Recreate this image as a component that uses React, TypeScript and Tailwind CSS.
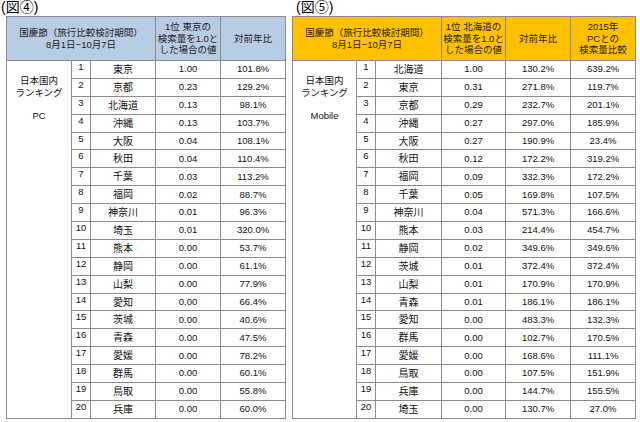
const FONT = "font-['Liberation_Sans','Noto_Sans_CJK_JP',sans-serif]";

type PcRow = [string, string, string];
type MobileRow = [string, string, string, string];

const PC_ROWS: PcRow[] = [
  ["東京", "1.00", "101.8%"],
  ["京都", "0.23", "129.2%"],
  ["北海道", "0.13", "98.1%"],
  ["沖縄", "0.13", "103.7%"],
  ["大阪", "0.04", "108.1%"],
  ["秋田", "0.04", "110.4%"],
  ["千葉", "0.03", "113.2%"],
  ["福岡", "0.02", "88.7%"],
  ["神奈川", "0.01", "96.3%"],
  ["埼玉", "0.01", "320.0%"],
  ["熊本", "0.00", "53.7%"],
  ["静岡", "0.00", "61.1%"],
  ["山梨", "0.00", "77.9%"],
  ["愛知", "0.00", "66.4%"],
  ["茨城", "0.00", "40.6%"],
  ["青森", "0.00", "47.5%"],
  ["愛媛", "0.00", "78.2%"],
  ["群馬", "0.00", "60.1%"],
  ["鳥取", "0.00", "55.8%"],
  ["兵庫", "0.00", "60.0%"],
];

const MOBILE_ROWS: MobileRow[] = [
  ["北海道", "1.00", "130.2%", "639.2%"],
  ["東京", "0.31", "271.8%", "119.7%"],
  ["京都", "0.29", "232.7%", "201.1%"],
  ["沖縄", "0.27", "297.0%", "185.9%"],
  ["大阪", "0.27", "190.9%", "23.4%"],
  ["秋田", "0.12", "172.2%", "319.2%"],
  ["福岡", "0.09", "332.3%", "172.2%"],
  ["千葉", "0.05", "169.8%", "107.5%"],
  ["神奈川", "0.04", "571.3%", "166.6%"],
  ["熊本", "0.03", "214.4%", "454.7%"],
  ["静岡", "0.02", "349.6%", "349.6%"],
  ["茨城", "0.01", "372.4%", "372.4%"],
  ["山梨", "0.01", "170.9%", "170.9%"],
  ["青森", "0.01", "186.1%", "186.1%"],
  ["愛知", "0.00", "483.3%", "132.3%"],
  ["群馬", "0.00", "102.7%", "170.5%"],
  ["愛媛", "0.00", "168.6%", "111.1%"],
  ["鳥取", "0.00", "107.5%", "151.9%"],
  ["兵庫", "0.00", "144.7%", "155.5%"],
  ["埼玉", "0.00", "130.7%", "27.0%"],
];

const cell = "border border-[#8c8c8c] text-center align-middle p-0";

function Label({ device }: { device: string }) {
  return (
    <div className="pt-[14px] text-center leading-[11.5px]">
      <div>日本国内</div>
      <div>ランキング</div>
      <div>&nbsp;</div>
      <div>{device}</div>
    </div>
  );
}

function PcTable() {
  return (
    <table className="table-fixed w-[279px] border border-[#a6a6a6] text-[9.5px] text-[#111]">
      <colgroup>
        <col className="w-[65px]" />
        <col className="w-[19px]" />
        <col className="w-[65px]" />
        <col className="w-[65px]" />
        <col className="w-[65px]" />
      </colgroup>
      <thead>
        <tr className="h-[44px] bg-[#b8cce4] text-[#222] leading-[11.5px]">
          <th colSpan={3} className={cell + " font-normal"}>
            国慶節（旅行比較検討期間）
            <br />
            8月1日−10月7日
          </th>
          <th className={cell + " font-normal"}>
            1位 東京の
            <br />
            検索量を1.0と
            <br />
            した場合の値
          </th>
          <th className={cell + " font-normal"}>対前年比</th>
        </tr>
      </thead>
      <tbody>
        {PC_ROWS.map(([name, value, yoy], i) => (
          <tr key={name} className="h-[17.9px]">
            {i === 0 && (
              <td rowSpan={20} className="border border-[#8c8c8c] align-top p-0">
                <Label device="PC" />
              </td>
            )}
            <td className="border border-[#8c8c8c] align-top text-center pt-[1px] leading-[10px]">
              {i + 1}
            </td>
            <td className={cell + " text-[10px]"}>{name}</td>
            <td className={cell}>{value}</td>
            <td className={cell}>{yoy}</td>
          </tr>
        ))}
      </tbody>
    </table>
  );
}

function MobileTable() {
  return (
    <table className="table-fixed w-[343px] border border-[#a6a6a6] text-[9.5px] text-[#111]">
      <colgroup>
        <col className="w-[64px]" />
        <col className="w-[19px]" />
        <col className="w-[66px]" />
        <col className="w-[64px]" />
        <col className="w-[65px]" />
        <col className="w-[65px]" />
      </colgroup>
      <thead>
        <tr className="h-[44px] bg-[#ffc000] text-[#2a2200] leading-[11.5px]">
          <th colSpan={3} className={cell + " font-normal"}>
            国慶節（旅行比較検討期間）
            <br />
            8月1日−10月7日
          </th>
          <th className={cell + " font-normal"}>
            1位 北海道の
            <br />
            検索量を1.0と
            <br />
            した場合の値
          </th>
          <th className={cell + " font-normal"}>対前年比</th>
          <th className={cell + " font-normal"}>
            2015年
            <br />
            PCとの
            <br />
            検索量比較
          </th>
        </tr>
      </thead>
      <tbody>
        {MOBILE_ROWS.map(([name, value, yoy, vsPc], i) => (
          <tr key={name} className="h-[17.9px]">
            {i === 0 && (
              <td rowSpan={20} className="border border-[#8c8c8c] align-top p-0">
                <Label device="Mobile" />
              </td>
            )}
            <td className="border border-[#8c8c8c] align-top text-center pt-[1px] leading-[10px]">
              {i + 1}
            </td>
            <td className={cell + " text-[10px]"}>{name}</td>
            <td className={cell}>{value}</td>
            <td className={cell}>{yoy}</td>
            <td className={cell}>{vsPc}</td>
          </tr>
        ))}
      </tbody>
    </table>
  );
}

export default function App() {
  return (
    <div className={`${FONT} w-[640px] h-[422px] bg-white flex overflow-hidden`}>
      <div className="flex flex-col">
        <div className="h-[16px] pl-[1px] text-[14px] leading-[15px] text-black">(図④)</div>
        <div className="pl-[6px]">
          <PcTable />
        </div>
      </div>
      <div className="flex flex-col pl-[6px]">
        <div className="h-[16px] pl-[4px] text-[14px] leading-[15px] text-black">(図⑤)</div>
        <MobileTable />
      </div>
    </div>
  );
}
